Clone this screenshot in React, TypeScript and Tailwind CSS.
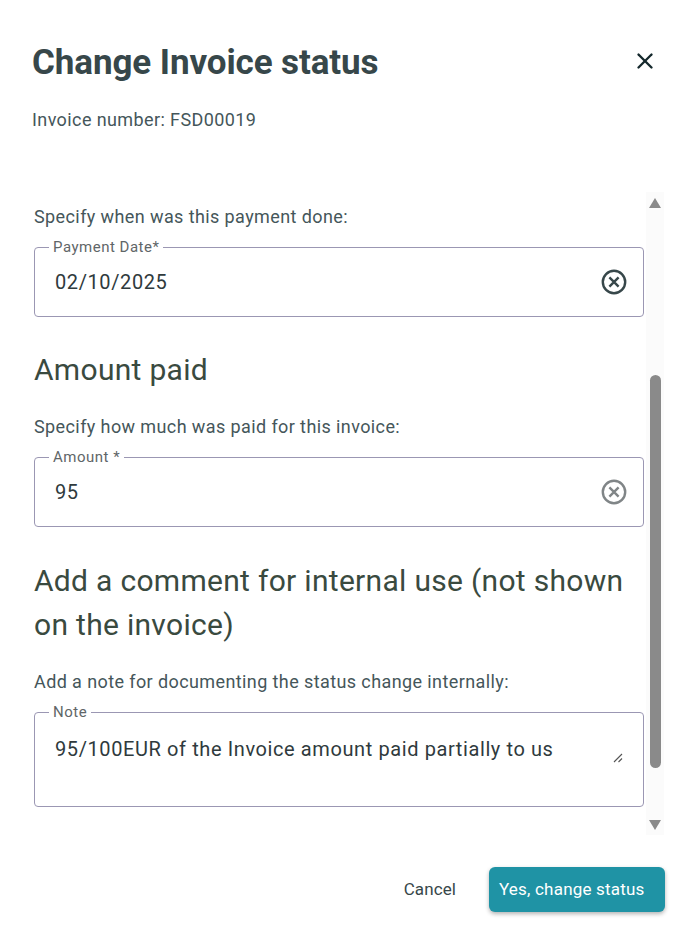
import { X } from "lucide-react";

const font = { fontFamily: "Roboto, sans-serif" };

function ClearIcon({ className }: { className: string }) {
  return (
    <svg viewBox="0 0 26 26" fill="none" stroke="currentColor" className={className}>
      <circle cx="13" cy="13" r="11.2" strokeWidth="2.4" />
      <path d="M8.4 8.4l9.2 9.2M17.6 8.4l-9.2 9.2" strokeWidth="2.4" />
    </svg>
  );
}

function Field({ label, value, iconClass }: { label: string; value: string; iconClass?: string }) {
  return (
    <fieldset className="relative h-[77px] rounded border border-[#9b97b3] px-[14px]">
      <legend className="px-[4px] text-[15px] leading-[14px] tracking-[0.5px] text-[#5f6668]">{label}</legend>
      <div className="flex h-[56px] items-center justify-between pl-[6px] pr-[2px]">
        <span className="text-[20px] tracking-[0.6px] text-[#2f3a3d]">{value}</span>
        <ClearIcon className={`h-[26px] w-[26px] ${iconClass ?? "text-[#37474a]"}`} />
      </div>
    </fieldset>
  );
}

export default function App() {
  return (
    <div style={font} className="flex h-[947px] w-[696px] flex-col overflow-hidden bg-white text-[#37474a]">
      <div className="flex items-start justify-between pl-8 pr-[38px] pt-[41px]">
        <h1 className="text-[35px] leading-[44px] font-bold tracking-[-0.1px] text-[#37474a]">Change Invoice status</h1>
        <X className="mt-[7px] h-[26px] w-[26px] text-[#14282c]" strokeWidth={2.2} />
      </div>
      <p className="mt-[23px] pl-8 text-[18px] leading-[24px] tracking-[0.4px] text-[#45565a]">
        Invoice number: FSD00019
      </p>

      <div className="mt-[60px] flex h-[643px] pl-[34px] pr-[32px]">
        <div className="flex w-[610px] flex-col overflow-hidden pt-[13px]">
          <p className="text-[18px] leading-[24px] tracking-[0.4px] text-[#45565a]">Specify when was this payment done:</p>
          <div className="mt-[11px]">
            <Field label="Payment Date*" value="02/10/2025" />
          </div>
          <h2 className="mt-[31px] text-[30px] leading-[44px] tracking-[0.3px] text-[#3a4a3f]">Amount paid</h2>
          <p className="mt-[23px] text-[18px] leading-[24px] tracking-[0.4px] text-[#45565a]">
            Specify how much was paid for this invoice:
          </p>
          <div className="mt-[11px]">
            <Field label="Amount *" value="95" iconClass="text-[#808587]" />
          </div>
          <h2 className="mt-[32px] text-[30px] leading-[44px] tracking-[0.3px] text-[#3a4a3f]">
            Add a comment for internal use (not shown on the invoice)
          </h2>
          <p className="mt-[23px] text-[18px] leading-[24px] tracking-[0.4px] text-[#45565a]">
            Add a note for documenting the status change internally:
          </p>
          <fieldset className="relative mt-[11px] h-[102px] shrink-0 rounded border border-[#9b97b3] px-[14px]">
            <legend className="px-[4px] text-[15px] leading-[14px] tracking-[0.5px] text-[#5f6668]">Note</legend>
            <div className="flex items-start justify-between pl-[6px] pr-[6px] pt-[16px]">
              <span className="text-[20px] leading-[28px] tracking-[0.6px] text-[#2f3a3d]">
                95/100EUR of the Invoice amount paid partially to us
              </span>
              <svg viewBox="0 0 10 10" className="mt-[18px] h-[10px] w-[10px] text-[#555]" stroke="currentColor" fill="none">
                <path d="M1 9L9 1M5.5 9L9 5.5" strokeWidth="1.1" />
              </svg>
            </div>
          </fieldset>
        </div>

        <div className="ml-[2px] flex w-[18px] flex-col items-center bg-[#fbfbfb]">
          <div className="mt-[6px] h-0 w-0 border-x-[6px] border-b-[10px] border-x-transparent border-b-[#8a8a8a]" />
          <div className="mt-[167px] h-[393px] w-[11px] rounded-t-[6px] rounded-b-[6px] bg-[#8a8a8a]" />
          <div className="mt-[52px] h-0 w-0 border-x-[6px] border-t-[10px] border-x-transparent border-t-[#8a8a8a]" />
        </div>
      </div>

      <div className="mt-[32px] flex items-center justify-end pr-[31px]">
        <button className="mr-[33px] text-[17px] font-[450] tracking-[0.1px] text-[#37474a]">Cancel</button>
        <button className="h-[45px] w-[176px] rounded-[6px] bg-[#1f93a5] pl-[10px] text-left text-[17px] font-[450] tracking-[0.2px] text-white shadow-[0_2px_4px_rgba(0,0,0,0.3)]">
          Yes, change status
        </button>
      </div>
    </div>
  );
}
